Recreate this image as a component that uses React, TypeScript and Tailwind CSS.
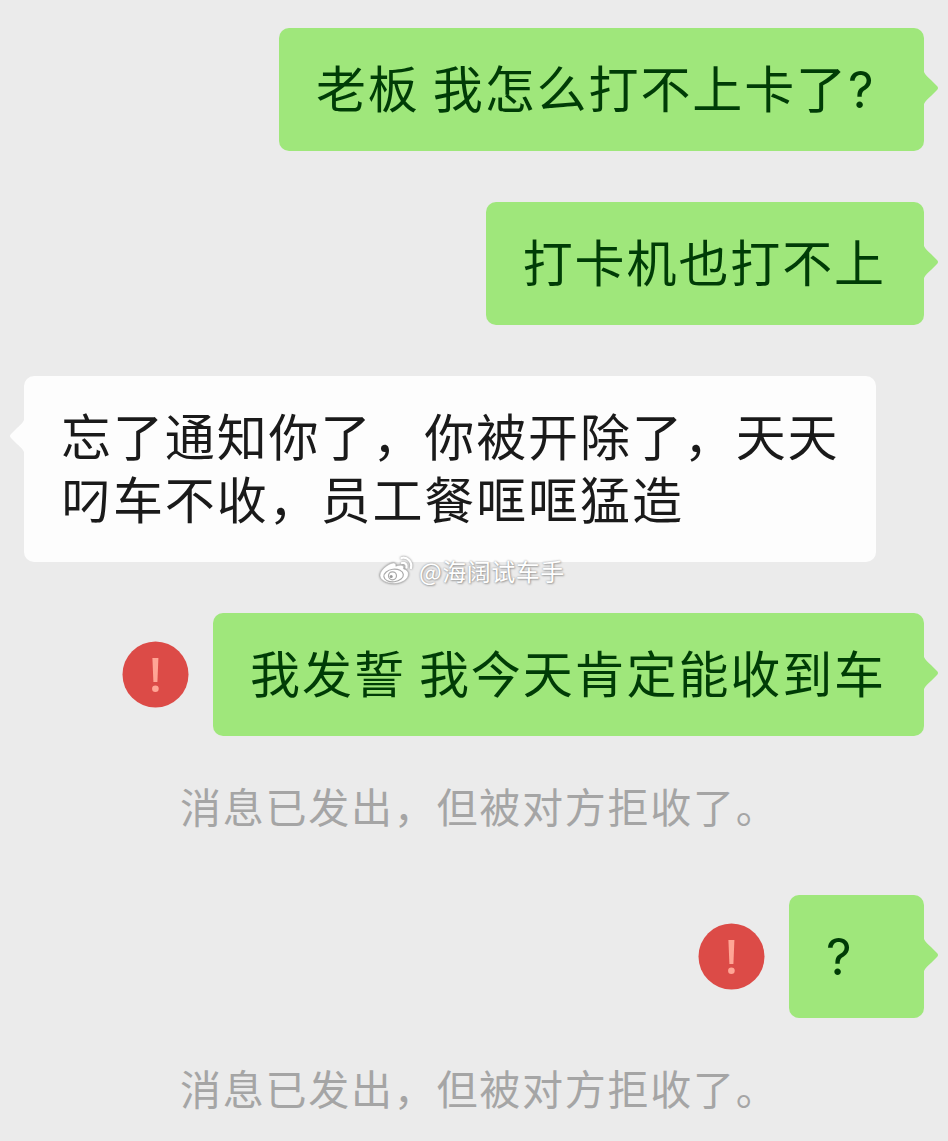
import type { ReactNode } from 'react';

type Message = {
  text: string;
  side: 'left' | 'right';
  question?: boolean;
  failed?: boolean;
  notice?: string;
};

const messages: Message[] = [
  { text: '老板 我怎么打不上卡了', side: 'right', question: true },
  { text: '打卡机也打不上', side: 'right' },
  { text: '忘了通知你了，你被开除了，天天叼车不收，员工餐哐哐猛造', side: 'left' },
  { text: '我发誓 我今天肯定能收到车', side: 'right', failed: true, notice: '消息已发出，但被对方拒收了。' },
  { text: '', side: 'right', question: true, failed: true, notice: '消息已发出，但被对方拒收了。' },
];

function FailedIcon() {
  return (
    <svg className="mr-6 size-[67px] shrink-0" viewBox="0 0 67 67">
      <circle cx="33.5" cy="33.5" r="33" fill="#dc4b47" />
      <path d="M30.4 17h6l-1 24h-4z" fill="#ffa595" />
      <circle cx="33.4" cy="47.8" r="3.3" fill="#ffa595" />
    </svg>
  );
}

function Bubble({ side, children }: { side: Message['side']; children: ReactNode }) {
  const mine = side === 'right';
  return (
    <div
      className={
        mine
          ? 'relative min-w-[135px] rounded-[10px] bg-[#9fe77b] pt-[27px] pr-[38px] pb-[33px] pl-[37px] text-[#003c06]'
          : 'relative w-[852px] rounded-[10px] bg-[#fdfdfd] pt-[27px] pr-[34px] pb-[33px] pl-[37px] text-[#1a1a1a]'
      }
    >
      <p className="text-[50px] leading-[63px] tracking-[1.9px]">{children}</p>
      {mine ? (
        <svg className="absolute top-11 -right-[15px] h-8 w-4" viewBox="0 0 16 32">
          <path d="M0 0 1 0C2 3 5 5 8 8l6 6q2 2 0 4l-6 6c-3 3-6 5-7 8H0z" fill="#9fe77b" />
        </svg>
      ) : (
        <svg className="absolute top-11 -left-[15px] h-8 w-4" viewBox="0 0 16 32">
          <path d="M16 0h-1c-1 3-4 5-7 8l-6 6q-2 2 0 4l6 6c3 3 6 5 7 8h1z" fill="#fdfdfd" />
        </svg>
      )}
    </div>
  );
}

function Watermark() {
  return (
    <div className="absolute top-[553px] left-[378px] flex items-center gap-1 text-white">
      <svg className="h-8 w-[37px] drop-shadow-[0_0_1px_#777]" viewBox="0 0 37 32" fill="none">
        <path
          d="M13 8.5c3-1.3 5.500-.4 4.800 2.700 4-1.700 9-1.500 7.600 2.600 3.200 1 5 2.700 5 5.200 0 5.200-6.600 9.500-14.200 9.500S2 25 2 20.500C2 16 7.200 11 13 8.500z"
          fill="#fff"
          stroke="#bbb"
          strokeWidth="0.6"
        />
        <ellipse cx="15.6" cy="20.5" rx="9.8" ry="6.3" transform="rotate(-7 15.6 20.5)" stroke="#aaa" strokeWidth="1.2" />
        <circle cx="14.5" cy="20.8" r="4" stroke="#aaa" strokeWidth="1.2" />
        <circle cx="13.2" cy="21.6" r="1.5" fill="#999" />
        <path d="M23.5 3c6-1.500 11 4 9.500 10M24 8c3-.8 5.300 1.500 4.500 4.500" stroke="#fff" strokeWidth="2.3" strokeLinecap="round" />
      </svg>
      <span className="text-[24px] leading-9 tracking-[0.5px] [text-shadow:0_0_2px_#888,1px_1px_2px_#aaa]">
        @海阔试车手
      </span>
    </div>
  );
}

export default function App() {
  return (
    <main className="relative h-[1141px] w-[948px] overflow-hidden bg-[#ebebeb] pt-7 pr-6 pl-6 font-['Noto_Sans_CJK_SC',sans-serif]">
      <div className="flex flex-col gap-[51px]">
        {messages.map((message, i) => (
          <div key={i}>
            <div className={message.side === 'right' ? 'flex items-center justify-end' : 'flex items-center'}>
              {message.failed && <FailedIcon />}
              <Bubble side={message.side}>
                {message.text}
                {message.question && (
                  <span className="inline-block w-[38px] font-['Inter','Noto_Sans_CJK_SC',sans-serif] leading-none">?</span>
                )}
              </Bubble>
            </div>
            {message.notice && (
              <p className="mt-9 pb-1.5 pl-[156px] text-[41px] leading-[66px] tracking-[1.75px] text-[#a5a5a5]">
                {message.notice}
              </p>
            )}
          </div>
        ))}
      </div>
      <Watermark />
    </main>
  );
}
